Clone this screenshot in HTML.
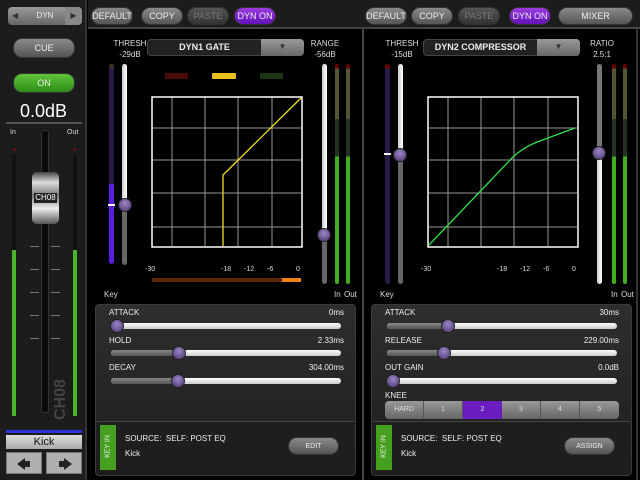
<!DOCTYPE html>
<html><head><meta charset="utf-8"><style>
*{margin:0;padding:0;box-sizing:border-box}
body{width:640px;height:480px;background:#000;position:relative;overflow:hidden;font-family:"Liberation Sans",sans-serif;color:#eee}
div,span{position:absolute}
.b{border-radius:9px;font-size:9px;text-align:center;line-height:17px;height:18px;color:#eee;background:linear-gradient(#8a8a8a,#555);border:1px solid #333}
.p{background:linear-gradient(#9b3be0,#6112b8)}
.d{background:linear-gradient(#555,#333);color:#777}
.t{font-size:8px;color:#ddd}
.tr{height:6px;border-radius:3px;background:linear-gradient(#fff,#ccc)}
.tl{height:6px;border-radius:3px;background:linear-gradient(#888,#555)}
.k{width:14px;height:14px;border-radius:7px;background:radial-gradient(circle at 50% 35%,#9a86c4,#4a3470);border:1px solid #222}
.lab{font-size:8px;color:#eee}
.vt{width:5px;border-radius:3px}
.tk{width:9px;height:1px;background:#777}
</style></head><body>
<!-- left strip -->
<div style="left:0;top:0;width:87px;height:480px;background:#1c1c1c;border-right:2px solid #333"></div>
<div style="left:8px;top:7px;width:74px;height:18px;border-radius:4px;background:linear-gradient(#999,#666);font-size:8px;line-height:18px;text-align:center;color:#eee">
<span style="left:4px;top:0;color:#333">◀</span>DYN<span style="right:0;top:0;width:17px;background:#888;border-radius:0 4px 4px 0;color:#333;height:18px">▶</span></div>
<div class="b" style="left:13px;top:38px;width:62px;height:20px;line-height:19px;font-size:9px">CUE</div>
<div class="b" style="left:13px;top:73px;width:62px;height:20px;line-height:19px;background:linear-gradient(#5fc43a,#2e8d18);font-size:9px">ON</div>
<div style="left:0;top:101px;width:87px;text-align:center;font-size:18px;color:#fff">0.0dB</div>
<div style="left:6px;top:122px;width:76px;height:2px;background:#555"></div>
<div class="t" style="left:10px;top:129px;font-size:7px">In</div>
<div class="t" style="left:67px;top:129px;font-size:7px">Out</div>
<div style="left:13px;top:148px;width:3px;height:3px;background:#611;border-radius:2px"></div>
<div style="left:73px;top:148px;width:3px;height:3px;background:#611;border-radius:2px"></div>
<div style="left:12px;top:155px;width:4px;height:261px;background:#111"></div>
<div style="left:12px;top:250px;width:4px;height:166px;background:#4ab52a"></div>
<div style="left:73px;top:155px;width:4px;height:261px;background:#111"></div>
<div style="left:73px;top:250px;width:4px;height:166px;background:#4ab52a"></div>
<div style="left:41px;top:130px;width:8px;height:283px;background:#0a0a0a;border:1px solid #333;border-radius:3px"></div>
<div class="tk" style="left:30px;top:246px"></div><div class="tk" style="left:51px;top:246px"></div>
<div class="tk" style="left:30px;top:269px"></div><div class="tk" style="left:51px;top:269px"></div>
<div class="tk" style="left:30px;top:292px"></div><div class="tk" style="left:51px;top:292px"></div>
<div class="tk" style="left:30px;top:315px"></div><div class="tk" style="left:51px;top:315px"></div>
<div class="tk" style="left:30px;top:338px"></div><div class="tk" style="left:51px;top:338px"></div>
<div style="left:32px;top:172px;width:27px;height:52px;border-radius:5px;background:linear-gradient(#444,#ddd 20%,#777 45%,#eee 70%,#555);font-size:8px;color:#fff;text-align:center;line-height:52px"><span style="left:2px;top:21px;width:23px;height:10px;background:#222;line-height:10px">CH08</span></div>
<div style="left:52px;top:420px;font-size:16px;font-weight:bold;color:#444;transform:rotate(-90deg);transform-origin:0 0">CH08</div>
<div style="left:6px;top:430px;width:76px;height:3px;background:#2a32d8"></div>
<div style="left:6px;top:435px;width:76px;height:14px;background:linear-gradient(#ddd,#aaa);color:#111;font-size:11px;text-align:center;line-height:14px">Kick</div>
<div style="left:6px;top:452px;width:36px;height:22px;background:#b0b0b0;border:1px solid #777"><span style="left:10px;top:5px;width:0;height:0;border-top:6px solid transparent;border-bottom:6px solid transparent;border-right:8px solid #222"></span><span style="left:18px;top:8px;width:5px;height:6px;background:#222"></span></div>
<div style="left:46px;top:452px;width:36px;height:22px;background:#b0b0b0;border:1px solid #777"><span style="left:12px;top:8px;width:5px;height:6px;background:#222"></span><span style="left:17px;top:5px;width:0;height:0;border-top:6px solid transparent;border-bottom:6px solid transparent;border-left:8px solid #222"></span></div>
<!-- top bar -->
<div style="left:88px;top:0;width:552px;height:29px;background:#1c1c1c;border-bottom:2px solid #444"></div>
<div class="b" style="left:91px;top:7px;width:42px">DEFAULT</div>
<div class="b" style="left:141px;top:7px;width:42px">COPY</div>
<div class="b d" style="left:187px;top:7px;width:42px">PASTE</div>
<div class="b p" style="left:234px;top:7px;width:42px">DYN ON</div>
<div class="b" style="left:365px;top:7px;width:42px">DEFAULT</div>
<div class="b" style="left:411px;top:7px;width:42px">COPY</div>
<div class="b d" style="left:458px;top:7px;width:42px">PASTE</div>
<div class="b p" style="left:509px;top:7px;width:42px">DYN ON</div>
<div class="b" style="left:558px;top:7px;width:75px">MIXER</div>
<div style="left:362px;top:29px;width:2px;height:451px;background:#444"></div>
<div style="left:636px;top:29px;width:2px;height:451px;background:#333"></div>

<!-- PANEL 1 -->
<div class="t" style="left:110px;top:38px;width:40px;text-align:center;line-height:11px">THRESH<br>-29dB</div>
<div style="left:147px;top:39px;width:157px;height:17px;border-radius:4px;background:#222;border:1px solid #444;font-size:9px;font-weight:bold;line-height:15px;color:#eee"><span style="left:0;width:113px;text-align:center">DYN1 GATE</span><span style="left:113px;top:-1px;width:43px;height:17px;background:linear-gradient(#999,#666);border-radius:0 4px 4px 0;text-align:center;color:#333;font-size:8px">▼</span></div>
<div class="t" style="left:305px;top:38px;width:40px;text-align:center;line-height:11px">RANGE<br>-56dB</div>
<div class="vt" style="left:109px;top:64px;height:200px;background:linear-gradient(#441 0,#2a1a4a 3%,#2a1a4a 60%,#5a1ee0 60%)"></div>
<div style="left:108px;top:204px;width:7px;height:2px;background:#fff"></div>
<div class="vt" style="left:122px;top:64px;height:200px;background:linear-gradient(90deg,#ccc,#fff);width:5px"></div>
<div class="vt" style="left:122px;top:205px;height:60px;background:#666;width:5px"></div>
<div class="k" style="left:118px;top:198px"></div>
<div class="t" style="left:104px;top:290px">Key</div>
<div style="left:165px;top:73px;width:23px;height:6px;background:#4a0a0a"></div>
<div style="left:212px;top:73px;width:24px;height:6px;background:#e8c020;border-radius:1px"></div>
<div style="left:260px;top:73px;width:23px;height:6px;background:#1c3512"></div>
<svg style="position:absolute;left:151px;top:96px" width="152" height="152">
<g stroke="#999" stroke-width="1"><line x1="21" y1="1" x2="21" y2="150"/><line x1="54" y1="1" x2="54" y2="150"/><line x1="87" y1="1" x2="87" y2="150"/><line x1="121" y1="1" x2="121" y2="150"/>
<line x1="1" y1="32" x2="150" y2="32"/><line x1="1" y1="64" x2="150" y2="64"/><line x1="1" y1="97" x2="150" y2="97"/><line x1="1" y1="131" x2="150" y2="131"/></g>
<rect x="1" y="1" width="150" height="150" fill="none" stroke="#fff" stroke-width="1.5"/>
<polyline points="150,2 72,79 72,150" fill="none" stroke="#f0e020" stroke-width="1.3"/></svg>
<div class="t" style="left:145px;top:266px;font-size:7px">-30</div>
<div class="t" style="left:221px;top:266px;font-size:7px">-18</div>
<div class="t" style="left:244px;top:266px;font-size:7px">-12</div>
<div class="t" style="left:267px;top:266px;font-size:7px">-6</div>
<div class="t" style="left:296px;top:266px;font-size:7px">0</div>
<div style="left:152px;top:278px;width:130px;height:4px;background:#5a2a08"></div>
<div style="left:282px;top:278px;width:19px;height:4px;background:#f08010"></div>
<div class="vt" style="left:322px;top:64px;height:170px;background:linear-gradient(90deg,#ccc,#fff)"></div>
<div class="vt" style="left:322px;top:234px;height:50px;background:#666"></div>
<div class="k" style="left:317px;top:228px"></div>
<div class="vt" style="left:335px;top:64px;height:220px;background:linear-gradient(#600 0 2%,#553 2%,#553 25%,#232 25%,#232 42%,#3fae20 42%);width:4px"></div>
<div class="vt" style="left:346px;top:64px;height:220px;background:linear-gradient(#600 0 2%,#553 2%,#553 25%,#232 25%,#232 42%,#3fae20 42%);width:4px"></div>
<div class="t" style="left:334px;top:290px">In</div><div class="t" style="left:344px;top:290px">Out</div>

<div style="left:95px;top:304px;width:261px;height:172px;border-radius:4px;background:linear-gradient(#2e2e2e,#1e1e1e);border:1px solid #3a3a3a"></div>
<div class="lab" style="left:109px;top:308px">ATTACK</div><div class="lab" style="left:310px;top:308px;width:34px;text-align:right">0ms</div>
<div class="tr" style="left:111px;top:323px;width:230px"></div><div class="k" style="left:110px;top:319px"></div>
<div class="lab" style="left:109px;top:336px">HOLD</div><div class="lab" style="left:290px;top:336px;width:54px;text-align:right">2.33ms</div>
<div class="tr" style="left:111px;top:350px;width:230px"></div><div class="tl" style="left:111px;top:350px;width:68px"></div><div class="k" style="left:172px;top:346px"></div>
<div class="lab" style="left:109px;top:363px">DECAY</div><div class="lab" style="left:290px;top:363px;width:54px;text-align:right">304.00ms</div>
<div class="tr" style="left:111px;top:378px;width:230px"></div><div class="tl" style="left:111px;top:378px;width:67px"></div><div class="k" style="left:171px;top:374px"></div>
<div style="left:97px;top:421px;width:257px;height:52px;border-top:1px solid #444;background:#1e1e1e"></div>
<div style="left:100px;top:425px;width:16px;height:45px;background:#45a020;color:#eee;font-size:7px"><span style="left:-8px;top:18px;width:32px;transform:rotate(-90deg);text-align:center">KEY IN</span></div>
<div class="lab" style="left:125px;top:434px;font-size:8px">SOURCE:&nbsp; SELF: POST EQ</div>
<div class="lab" style="left:125px;top:449px;font-size:8px">Kick</div>
<div class="b" style="left:288px;top:437px;width:51px;height:18px;font-size:7px;border-radius:9px">EDIT</div>

<!-- PANEL 2 -->
<div class="t" style="left:382px;top:38px;width:40px;text-align:center;line-height:11px">THRESH<br>-15dB</div>
<div style="left:423px;top:39px;width:157px;height:17px;border-radius:4px;background:#222;border:1px solid #444;font-size:9px;font-weight:bold;line-height:15px;color:#eee"><span style="left:0;width:113px;text-align:center">DYN2 COMPRESSOR</span><span style="left:113px;top:-1px;width:43px;height:17px;background:linear-gradient(#999,#666);border-radius:0 4px 4px 0;text-align:center;color:#333;font-size:8px">▼</span></div>
<div class="t" style="left:582px;top:38px;width:40px;text-align:center;line-height:11px">RATIO<br>2.5:1</div>
<div class="vt" style="left:385px;top:64px;height:220px;background:linear-gradient(#600 0 2%,#2a1a4a 2%)"></div>
<div style="left:384px;top:153px;width:7px;height:2px;background:#fff"></div>
<div class="vt" style="left:398px;top:64px;height:90px;background:linear-gradient(90deg,#ccc,#fff)"></div>
<div class="vt" style="left:398px;top:154px;height:130px;background:#666"></div>
<div class="k" style="left:393px;top:148px"></div>
<div class="t" style="left:380px;top:290px">Key</div>
<svg style="position:absolute;left:427px;top:96px" width="152" height="152">
<g stroke="#999" stroke-width="1"><line x1="21" y1="1" x2="21" y2="150"/><line x1="54" y1="1" x2="54" y2="150"/><line x1="87" y1="1" x2="87" y2="150"/><line x1="121" y1="1" x2="121" y2="150"/>
<line x1="1" y1="32" x2="150" y2="32"/><line x1="1" y1="64" x2="150" y2="64"/><line x1="1" y1="97" x2="150" y2="97"/><line x1="1" y1="131" x2="150" y2="131"/></g>
<rect x="1" y="1" width="150" height="150" fill="none" stroke="#fff" stroke-width="1.5"/>
<path d="M2,149 L85,62 Q95,52 110,46 L148,32" fill="none" stroke="#2ee04a" stroke-width="1.3"/></svg>
<div class="t" style="left:421px;top:266px;font-size:7px">-30</div>
<div class="t" style="left:497px;top:266px;font-size:7px">-18</div>
<div class="t" style="left:520px;top:266px;font-size:7px">-12</div>
<div class="t" style="left:543px;top:266px;font-size:7px">-6</div>
<div class="t" style="left:572px;top:266px;font-size:7px">0</div>
<div class="vt" style="left:597px;top:64px;height:90px;background:#777"></div>
<div class="vt" style="left:597px;top:154px;height:130px;background:linear-gradient(90deg,#ccc,#fff)"></div>
<div class="k" style="left:592px;top:146px"></div>
<div class="vt" style="left:612px;top:64px;height:220px;background:linear-gradient(#600 0 2%,#553 2%,#553 25%,#232 25%,#232 42%,#3fae20 42%);width:4px"></div>
<div class="vt" style="left:623px;top:64px;height:220px;background:linear-gradient(#600 0 2%,#553 2%,#553 25%,#232 25%,#232 42%,#3fae20 42%);width:4px"></div>
<div class="t" style="left:611px;top:290px">In</div><div class="t" style="left:621px;top:290px">Out</div>

<div style="left:371px;top:304px;width:261px;height:172px;border-radius:4px;background:linear-gradient(#2e2e2e,#1e1e1e);border:1px solid #3a3a3a"></div>
<div class="lab" style="left:385px;top:308px">ATTACK</div><div class="lab" style="left:565px;top:308px;width:54px;text-align:right">30ms</div>
<div class="tr" style="left:387px;top:323px;width:230px"></div><div class="tl" style="left:387px;top:323px;width:62px"></div><div class="k" style="left:441px;top:319px"></div>
<div class="lab" style="left:385px;top:336px">RELEASE</div><div class="lab" style="left:565px;top:336px;width:54px;text-align:right">229.00ms</div>
<div class="tr" style="left:387px;top:350px;width:230px"></div><div class="tl" style="left:387px;top:350px;width:58px"></div><div class="k" style="left:437px;top:346px"></div>
<div class="lab" style="left:385px;top:363px">OUT GAIN</div><div class="lab" style="left:565px;top:363px;width:54px;text-align:right">0.0dB</div>
<div class="tr" style="left:387px;top:378px;width:230px"></div><div class="k" style="left:386px;top:374px"></div>
<div class="lab" style="left:385px;top:391px">KNEE</div>
<div style="left:385px;top:401px;width:234px;height:18px;border-radius:4px;background:linear-gradient(#999,#666);font-size:7px;line-height:18px;color:#ddd">
<span style="left:0;width:39px;text-align:center;border-right:1px solid #555">HARD</span><span style="left:39px;width:39px;text-align:center;border-right:1px solid #555">1</span><span style="left:78px;width:39px;text-align:center;background:#6a1cc0;height:18px">2</span><span style="left:117px;width:39px;text-align:center;border-right:1px solid #555">3</span><span style="left:156px;width:39px;text-align:center;border-right:1px solid #555">4</span><span style="left:195px;width:39px;text-align:center">5</span></div>
<div style="left:373px;top:421px;width:257px;height:52px;border-top:1px solid #444;background:#1e1e1e"></div>
<div style="left:376px;top:425px;width:16px;height:45px;background:#45a020;color:#eee;font-size:7px"><span style="left:-8px;top:18px;width:32px;transform:rotate(-90deg);text-align:center">KEY IN</span></div>
<div class="lab" style="left:401px;top:434px;font-size:8px">SOURCE:&nbsp; SELF: POST EQ</div>
<div class="lab" style="left:401px;top:449px;font-size:8px">Kick</div>
<div class="b" style="left:564px;top:437px;width:51px;height:18px;font-size:7px">ASSIGN</div>
</body></html>
